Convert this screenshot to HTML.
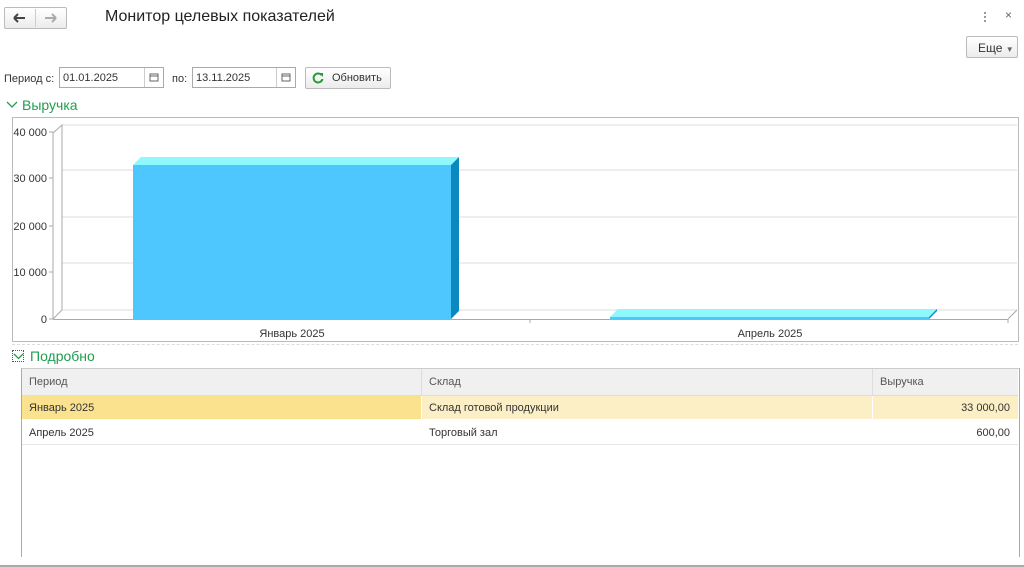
<!DOCTYPE html>
<html><head><meta charset="utf-8"><style>
body{margin:0;width:1024px;height:567px;background:#fff;font-family:"Liberation Sans",Arial,sans-serif;position:relative;overflow:hidden;color:#333}
.a{position:absolute}
.btn{border:1px solid #bbb;border-radius:2px;background:linear-gradient(#fff,#ececec);box-sizing:border-box}
.inp{border:1px solid #aaa;background:#fff;box-sizing:border-box;font-size:11px;color:#333;padding:4px 0 0 3px}
.cal{position:absolute;right:0;top:0;width:18px;height:100%;border-left:1px solid #ccc}
.t{font-size:11px;color:#333}
</style></head><body>
<div class="a btn" style="left:4px;top:7px;width:63px;height:22px"></div>
<div class="a" style="left:35px;top:9px;width:1px;height:18px;background:#ccc"></div>
<svg class="a" style="left:10px;top:10px" width="54" height="16"><path d="M4 8h11M4 8l4-4M4 8l4 4" stroke="#444" stroke-width="2" fill="none"/><path d="M35 8h11M46 8l-4-4M46 8l-4 4" stroke="#aaa" stroke-width="2" fill="none"/></svg>
<div class="a" style="left:105px;top:8px;font-size:16px;color:#222">Монитор целевых показателей</div>
<div class="a" style="left:984px;top:11px;width:2px;height:11px;background:radial-gradient(circle,#777 1px,transparent 1px) 0 0/2px 4px"></div>
<div class="a" style="left:1005px;top:8px;font-size:12px;color:#666">×</div>
<div class="a btn" style="left:966px;top:36px;width:52px;height:22px;font-size:12px;padding:4px 0 0 11px">Еще <span style="font-size:8px;color:#666">▼</span></div>
<div class="a t" style="left:4px;top:73px">Период с:</div>
<div class="a inp" style="left:59px;top:67px;width:105px;height:21px">01.01.2025<div class="cal"><svg width="18" height="19"><rect x="5" y="6" width="8" height="7" fill="none" stroke="#666"/><line x1="5" y1="8" x2="13" y2="8" stroke="#666"/></svg></div></div>
<div class="a t" style="left:172px;top:73px">по:</div>
<div class="a inp" style="left:192px;top:67px;width:104px;height:21px">13.11.2025<div class="cal"><svg width="18" height="19"><rect x="5" y="6" width="8" height="7" fill="none" stroke="#666"/><line x1="5" y1="8" x2="13" y2="8" stroke="#666"/></svg></div></div>
<div class="a btn" style="left:305px;top:67px;width:86px;height:22px;font-size:11px;padding:4px 0 0 26px">Обновить</div>
<svg class="a" style="left:311px;top:71px" width="14" height="14"><path d="M10.5 4A4.5 4.5 0 1 0 11.5 8" stroke="#2a9a3a" stroke-width="2" fill="none"/><path d="M8 2l4 0l0 4z" fill="#2a9a3a"/></svg>
<svg class="a" style="left:6px;top:100px" width="12" height="10"><path d="M1 2l5 5l5-5" stroke="#2a9a4a" stroke-width="1.3" fill="none"/></svg>
<div class="a" style="left:22px;top:97px;font-size:14px;color:#1f9f4f">Выручка</div>
<div class="a" style="left:12px;top:117px;width:1005px;height:223px;border:1px solid #bbb"></div>
<svg class="a" style="left:0;top:0" width="1024" height="350" font-family="Liberation Sans,Arial" font-size="11" fill="#333">
<g stroke="#ddd"><line x1="62" y1="125" x2="1017" y2="125"/><line x1="62" y1="170" x2="1017" y2="170"/><line x1="62" y1="217" x2="1017" y2="217"/><line x1="62" y1="263" x2="1017" y2="263"/><line x1="62" y1="310" x2="1017" y2="310"/></g>
<g stroke="#aaa" fill="none"><path d="M53 319V133L62 125V310"/><path d="M53 319L62 310"/><line x1="53" y1="319.5" x2="1008" y2="319.5"/><path d="M1008 319L1017 310"/><line x1="1008" y1="319" x2="1008" y2="323"/><line x1="530" y1="319" x2="530" y2="323"/><line x1="49" y1="132" x2="53" y2="132"/><line x1="49" y1="178" x2="53" y2="178"/><line x1="49" y1="226" x2="53" y2="226"/><line x1="49" y1="272" x2="53" y2="272"/><line x1="49" y1="319" x2="53" y2="319"/></g>
<g text-anchor="end"><text x="47" y="136">40 000</text><text x="47" y="182">30 000</text><text x="47" y="230">20 000</text><text x="47" y="276">10 000</text><text x="47" y="323">0</text></g>
<polygon points="133,165 141,157 459,157 451,165" fill="#8ef8fc"/>
<rect x="133" y="165" width="318" height="154" fill="#4dc7fd"/>
<polygon points="451,165 459,157 459,311 451,319" fill="#0a89c0"/>
<polygon points="610,317 618,309 937,309 929,317" fill="#8ef8fc"/>
<rect x="610" y="317" width="319" height="2" fill="#4dc7fd"/>
<polygon points="929,317 937,309 937,311 929,319" fill="#0a89c0"/>
<text x="292" y="337" text-anchor="middle">Январь 2025</text>
<text x="770" y="337" text-anchor="middle">Апрель 2025</text>
</svg>
<div class="a" style="left:12px;top:344px;width:1006px;border-top:1px dashed #ddd"></div>
<div class="a" style="left:12px;top:350px;width:12px;height:12px;border:1px dotted #555;box-sizing:border-box"></div>
<svg class="a" style="left:13px;top:352px" width="11" height="9"><path d="M1 2l4.5 4.5L10 2" stroke="#2a9a4a" stroke-width="1.3" fill="none"/></svg>
<div class="a" style="left:30px;top:348px;font-size:14px;color:#1f9f4f">Подробно</div>
<div class="a" style="left:21px;top:368px;width:997px;height:188px;border-left:1px solid #aaa;border-right:1px solid #aaa;border-top:1px solid #ccc"></div>
<div class="a" style="left:22px;top:369px;width:996px;height:26px;background:#f0f0f0;border-bottom:1px solid #ddd"></div>
<div class="a" style="left:421px;top:369px;width:1px;height:26px;background:#ddd"></div>
<div class="a" style="left:872px;top:369px;width:1px;height:26px;background:#ddd"></div>
<div class="a" style="left:22px;top:396px;width:399px;height:23px;background:#fbe28e"></div>
<div class="a" style="left:422px;top:396px;width:450px;height:23px;background:#fcefc6"></div>
<div class="a" style="left:873px;top:396px;width:145px;height:23px;background:#fcefc6"></div>
<div class="a" style="left:22px;top:420px;width:996px;height:24px;border-bottom:1px solid #e6e6e6"></div>
<div class="a t" style="left:29px;top:376px;color:#555">Период</div>
<div class="a t" style="left:429px;top:376px;color:#555">Склад</div>
<div class="a t" style="left:880px;top:376px;color:#555">Выручка</div>
<div class="a t" style="left:29px;top:402px">Январь 2025</div>
<div class="a t" style="left:429px;top:402px">Склад готовой продукции</div>
<div class="a t" style="left:880px;top:402px;width:130px;text-align:right">33 000,00</div>
<div class="a t" style="left:29px;top:427px">Апрель 2025</div>
<div class="a t" style="left:429px;top:427px">Торговый зал</div>
<div class="a t" style="left:880px;top:427px;width:130px;text-align:right">600,00</div>
<div class="a" style="left:0;top:565px;width:1024px;height:2px;background:#aaa"></div>
</body></html>
